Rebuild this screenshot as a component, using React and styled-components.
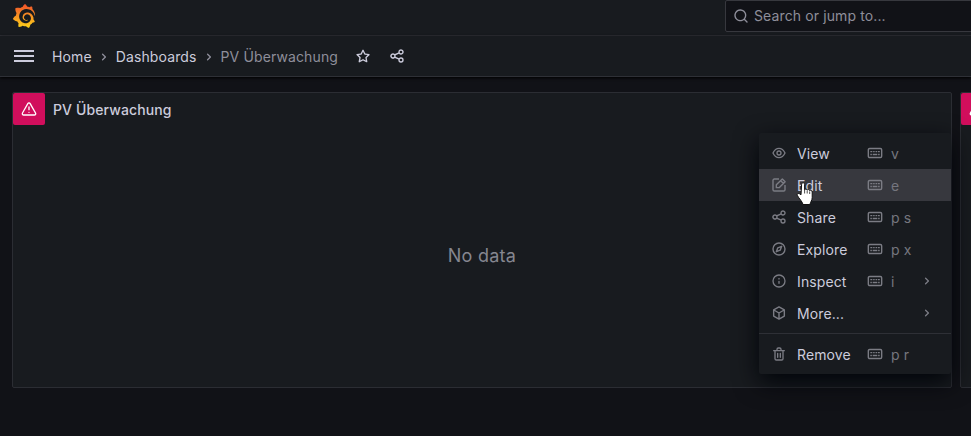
import React from "react";
import styled, { createGlobalStyle } from "styled-components";
import { SiGrafana } from "react-icons/si";

const GlobalStyle = createGlobalStyle`
  * { box-sizing: border-box; }
  html, body { margin: 0; background: #111217; overflow: hidden; }
  body {
    font-family: Inter, "Liberation Sans", sans-serif;
    font-size: 14px;
    line-height: 22px;
    letter-spacing: 0.12px;
    color: #ccccdc;
  }
`;

const paths = {
  search: "M21.71,20.29,18,16.61A9,9,0,1,0,16.61,18l3.68,3.68a1,1,0,0,0,1.42,0A1,1,0,0,0,21.71,20.29ZM11,18a7,7,0,1,1,7-7A7,7,0,0,1,11,18Z",
  star: "M22,9.67A1,1,0,0,0,21.14,9l-5.69-.83L12.9,3a1,1,0,0,0-1.8,0L8.55,8.16,2.86,9a1,1,0,0,0-.81.68,1,1,0,0,0,.25,1l4.13,4-1,5.68A1,1,0,0,0,6.9,21.44L12,18.77l5.1,2.67a.93.93,0,0,0,.46.12,1,1,0,0,0,.59-.19,1,1,0,0,0,.4-1l-1-5.68,4.13-4A1,1,0,0,0,22,9.67Zm-6.15,4a1,1,0,0,0-.29.88l.72,4.2-3.76-2a1.06,1.06,0,0,0-.94,0l-3.76,2,.72-4.2a1,1,0,0,0-.29-.88l-3-3,4.21-.61a1,1,0,0,0,.76-.55L12,5.7l1.88,3.82a1,1,0,0,0,.76.55l4.21.61Z",
  share: "M18,14a4,4,0,0,0-3.08,1.48l-5.1-2.35a3.64,3.64,0,0,0,0-2.26l5.1-2.35A4,4,0,1,0,14,6a4.17,4.17,0,0,0,.07.71L8.79,9.14a4,4,0,1,0,0,5.72l5.28,2.43A4.17,4.17,0,0,0,14,18a4,4,0,1,0,4-4ZM6,14a2,2,0,1,1,2-2A2,2,0,0,1,6,14ZM18,4a2,2,0,1,1-2,2A2,2,0,0,1,18,4Zm0,16a2,2,0,1,1,2-2A2,2,0,0,1,18,20Z",
  chevron: "M14.83,11.29,10.59,7.05a1,1,0,0,0-1.42,0,1,1,0,0,0,0,1.41L12.71,12,9.17,15.54a1,1,0,0,0,0,1.41,1,1,0,0,0,.71.29,1,1,0,0,0,.71-.29l4.24-4.24A1,1,0,0,0,14.83,11.29Z",
  warning: "M12,16a1,1,0,1,0,1,1A1,1,0,0,0,12,16Zm10.67,1.47-8.05-14a3,3,0,0,0-5.24,0l-8,14A3,3,0,0,0,3.94,22H20.06a3,3,0,0,0,2.61-4.53Zm-1.73,2a1,1,0,0,1-.88.51H3.94a1,1,0,0,1-.88-.51,1,1,0,0,1,0-1l8-14a1,1,0,0,1,1.78,0l8.05,14A1,1,0,0,1,20.94,19.49ZM12,8a1,1,0,0,0-1,1v4a1,1,0,0,0,2,0V9A1,1,0,0,0,12,8Z",
  info: "M12,2A10,10,0,1,0,22,12,10,10,0,0,0,12,2Zm0,18a8,8,0,1,1,8-8A8,8,0,0,1,12,20Zm0-8.5a1,1,0,0,0-1,1v3a1,1,0,0,0,2,0v-3A1,1,0,0,0,12,11.5Zm0-4a1.25,1.25,0,1,0,1.25,1.25A1.25,1.25,0,0,0,12,7.5Z",
  eye: "M21.92,11.6C19.9,6.91,16.1,4,12,4S4.1,6.91,2.08,11.6a1,1,0,0,0,0,.8C4.1,17.09,7.9,20,12,20s7.9-2.91,9.92-7.6A1,1,0,0,0,21.92,11.6ZM12,18c-3.17,0-6.17-2.29-7.9-6C5.83,8.29,8.83,6,12,6s6.17,2.29,7.9,6C18.17,15.71,15.17,18,12,18ZM12,8a4,4,0,1,0,4,4A4,4,0,0,0,12,8Zm0,6a2,2,0,1,1,2-2A2,2,0,0,1,12,14Z",
  trash: "M10,18a1,1,0,0,0,1-1V11a1,1,0,0,0-2,0v6A1,1,0,0,0,10,18ZM20,6H16V5a3,3,0,0,0-3-3H11A3,3,0,0,0,8,5V6H4A1,1,0,0,0,4,8H5V19a3,3,0,0,0,3,3h8a3,3,0,0,0,3-3V8h1a1,1,0,0,0,0-2ZM10,5a1,1,0,0,1,1-1h2a1,1,0,0,1,1,1V6H10Zm7,14a1,1,0,0,1-1,1H8a1,1,0,0,1-1-1V8H17Zm-3-1a1,1,0,0,0,1-1V11a1,1,0,0,0-2,0v6A1,1,0,0,0,14,18Z",
};

const strokes = {
  edit: "M12 3H5a2 2 0 0 0-2 2v14a2 2 0 0 0 2 2h14a2 2 0 0 0 2-2v-7M8 16v-4.2L17 2.9l4.2 4.2-9 8.9zM14.5 5.5l4 4",
  compass: "M12 3a9 9 0 1 0 0 18a9 9 0 0 0 0-18zM16 8l-2.2 5.8L8 16l2.2-5.8z",
  cube: "M12 2.8l8 4.6v9.2l-8 4.6-8-4.6V7.4zM4.3 7.5l7.7 4.5 7.7-4.5M12 12v9",
  keyboard: "M4 5.2h16a2 2 0 0 1 2 2v9.6a2 2 0 0 1-2 2H4a2 2 0 0 1-2-2V7.2a2 2 0 0 1 2-2zM5 10h3M9.2 10h2.3M12.8 10h2.3M16.2 10h3M5 14.2h2.3M8.5 14.2h7M16.7 14.2h2.3",
};

const Svg = styled.svg`
  display: block;
  flex: none;
  width: ${(p) => p.$size}px;
  height: ${(p) => p.$size}px;
`;

function Icon({ name, size = 16 }) {
  return (
    <Svg $size={size} viewBox="0 0 24 24">
      {paths[name] ? (
        <path d={paths[name]} fill="currentColor" />
      ) : (
        <path d={strokes[name]} fill="none" stroke="currentColor" strokeWidth="2.1" strokeLinejoin="round" />
      )}
    </Svg>
  );
}

const Page = styled.div`
  width: 971px;
  height: 436px;
  overflow: hidden;
  background: #111217;
`;

const TopBar = styled.header`
  display: flex;
  justify-content: space-between;
  height: 36px;
  padding-left: 12px;
  background: #181b1f;
  border-bottom: 1px solid #2e3036;
`;

const Logo = styled(SiGrafana)`
  display: block;
  width: 24px;
  height: 24px;
  margin-top: 4px;
`;

const GradientDefs = styled.svg`
  position: absolute;
  width: 0;
  height: 0;
`;

const SearchBox = styled.div`
  display: flex;
  align-items: center;
  gap: 5px;
  width: 300px;
  height: 32px;
  margin-right: -54px;
  padding-left: 7px;
  color: #8e8e9a;
  background: #111217;
  border: 1px solid #37383e;
  border-radius: 2px;
`;

const NavBar = styled.nav`
  position: relative;
  display: flex;
  align-items: center;
  height: 41px;
  padding: 0 0 0 14px;
  background: #181b1f;
  border-bottom: 1px solid #2e3036;
  box-shadow: 0 1px 3px #000;
`;

const Burger = styled.div`
  display: grid;
  gap: 3px;
  width: 20px;
  margin-right: 18px;
`;

const BurgerLine = styled.span`
  height: 2px;
  background: #ccccdc;
`;

const Crumbs = styled.div`
  display: flex;
  align-items: center;
  margin-top: 1px;
`;

const Crumb = styled.span`
  color: ${(p) => (p.$current ? "#8e8e9a" : "#ccccdc")};
`;

const Separator = styled.span`
  width: 24px;
  display: flex;
  justify-content: center;
  padding-top: 1px;
  color: #8e8e9a;
`;

const NavActions = styled.div`
  display: flex;
  gap: 18px;
  margin-left: 16.8px;
`;

const Board = styled.main`
  display: flex;
  gap: 8px;
  padding: 15px 0 0 12px;
`;

const Panel = styled.section`
  flex: none;
  width: 940px;
  height: 296px;
  background: #181b1f;
  border: 1px solid #2b2d33;
  border-radius: 2px;
`;

const PanelHeader = styled.div`
  display: flex;
  align-items: center;
  gap: 8px;
  height: 32px;
  font-weight: 500;
`;

const ErrorBadge = styled.div`
  display: grid;
  flex: none;
  place-items: center;
  width: 32px;
  height: 32px;
  color: #fff;
  background: #d10e5c;
  border-radius: 2px;
`;

const PanelTitle = styled.span`
  margin-top: 2px;
`;

const EmptyMessage = styled.div`
  display: grid;
  place-items: center;
  height: 262px;
  font-size: 18px;
  letter-spacing: 0.25px;
  color: #85868f;
`;

const Menu = styled.div`
  position: absolute;
  left: 759px;
  top: 133px;
  width: 192px;
  height: 241px;
  padding: 4px 0;
  background: #181b1f;
  border-radius: 2px;
  box-shadow: 0 8px 24px #010409;
`;

const MenuItem = styled.div`
  display: grid;
  grid-template-columns: 26px 70px 24px 1fr 16px;
  align-items: center;
  height: 32px;
  padding: 0 16px 0 12px;
  color: #7b7c84;
  background: ${(p) => (p.$active ? "#37383e" : "transparent")};
`;

const MenuLabel = styled.span`
  padding-top: 2px;
  color: #ccccdc;
`;

const Shortcut = styled.span`
  padding-top: 2px;
  color: #75767e;
`;

const Divider = styled.div`
  height: 1px;
  margin: 4px 0;
  background: #2e3036;
`;

const Pointer = styled.svg`
  position: absolute;
  left: 796px;
  top: 182px;
  width: 18px;
  height: 24px;
`;

const items = [
  { icon: "eye", label: "View", keys: "v" },
  { icon: "edit", label: "Edit", keys: "e", active: true },
  { icon: "share", label: "Share", keys: "p s" },
  { icon: "compass", label: "Explore", keys: "p x" },
  { icon: "info", label: "Inspect", keys: "i", sub: true },
  { icon: "cube", label: "More...", sub: true },
];

function Item({ icon, label, keys, sub, active }) {
  return (
    <MenuItem $active={active}>
      <Icon name={icon} />
      <MenuLabel>{label}</MenuLabel>
      {keys ? <Icon name="keyboard" /> : <span />}
      <Shortcut>{keys}</Shortcut>
      {sub ? <Icon name="chevron" /> : <span />}
    </MenuItem>
  );
}

export default function App() {
  return (
    <Page>
      <GlobalStyle />
      <GradientDefs>
        <linearGradient id="flame" x1="0" y1="1" x2="0" y2="0">
          <stop offset="0" stopColor="#fcd41a" />
          <stop offset="1" stopColor="#f1502a" />
        </linearGradient>
      </GradientDefs>
      <TopBar>
        <Logo fill="url(#flame)" />
        <SearchBox>
          <Icon name="search" />
          <span>Search or jump to...</span>
        </SearchBox>
      </TopBar>
      <NavBar>
        <Burger>
          <BurgerLine />
          <BurgerLine />
          <BurgerLine />
        </Burger>
        <Crumbs>
          <Crumb>Home</Crumb>
          <Separator><Icon name="chevron" /></Separator>
          <Crumb>Dashboards</Crumb>
          <Separator><Icon name="chevron" /></Separator>
          <Crumb $current>PV Überwachung</Crumb>
        </Crumbs>
        <NavActions>
          <Icon name="star" />
          <Icon name="share" />
        </NavActions>
      </NavBar>
      <Board>
        <Panel>
          <PanelHeader>
            <ErrorBadge><Icon name="warning" /></ErrorBadge>
            <PanelTitle>PV Überwachung</PanelTitle>
          </PanelHeader>
          <EmptyMessage>No data</EmptyMessage>
        </Panel>
        <Panel>
          <PanelHeader>
            <ErrorBadge><Icon name="warning" /></ErrorBadge>
          </PanelHeader>
        </Panel>
      </Board>
      <Menu>
        {items.map((item) => <Item key={item.label} {...item} />)}
        <Divider />
        <Item icon="trash" label="Remove" keys="p r" />
      </Menu>
      <Pointer viewBox="0 0 18 24">
        <path
          d="M5.600 2.300c0-2 3-2 3 0v5.500c.5-1 2.300-.9 2.600.3.500-.9 2.200-.7 2.500.6.700-.8 2.500-.3 2.500 1.300v5.500c0 3-1.800 4.300-2.300 7H7c-.5-3-4-5.700-5.700-9.200-.8-1.800 1.500-2.700 3.700-.5z"
          fill="#fff"
          stroke="#111"
        />
        <path d="M8.600 7.500v4M11.200 8.500v3M13.700 9.500v2.500" stroke="#222" strokeWidth="0.8" fill="none" />
      </Pointer>
    </Page>
  );
}
